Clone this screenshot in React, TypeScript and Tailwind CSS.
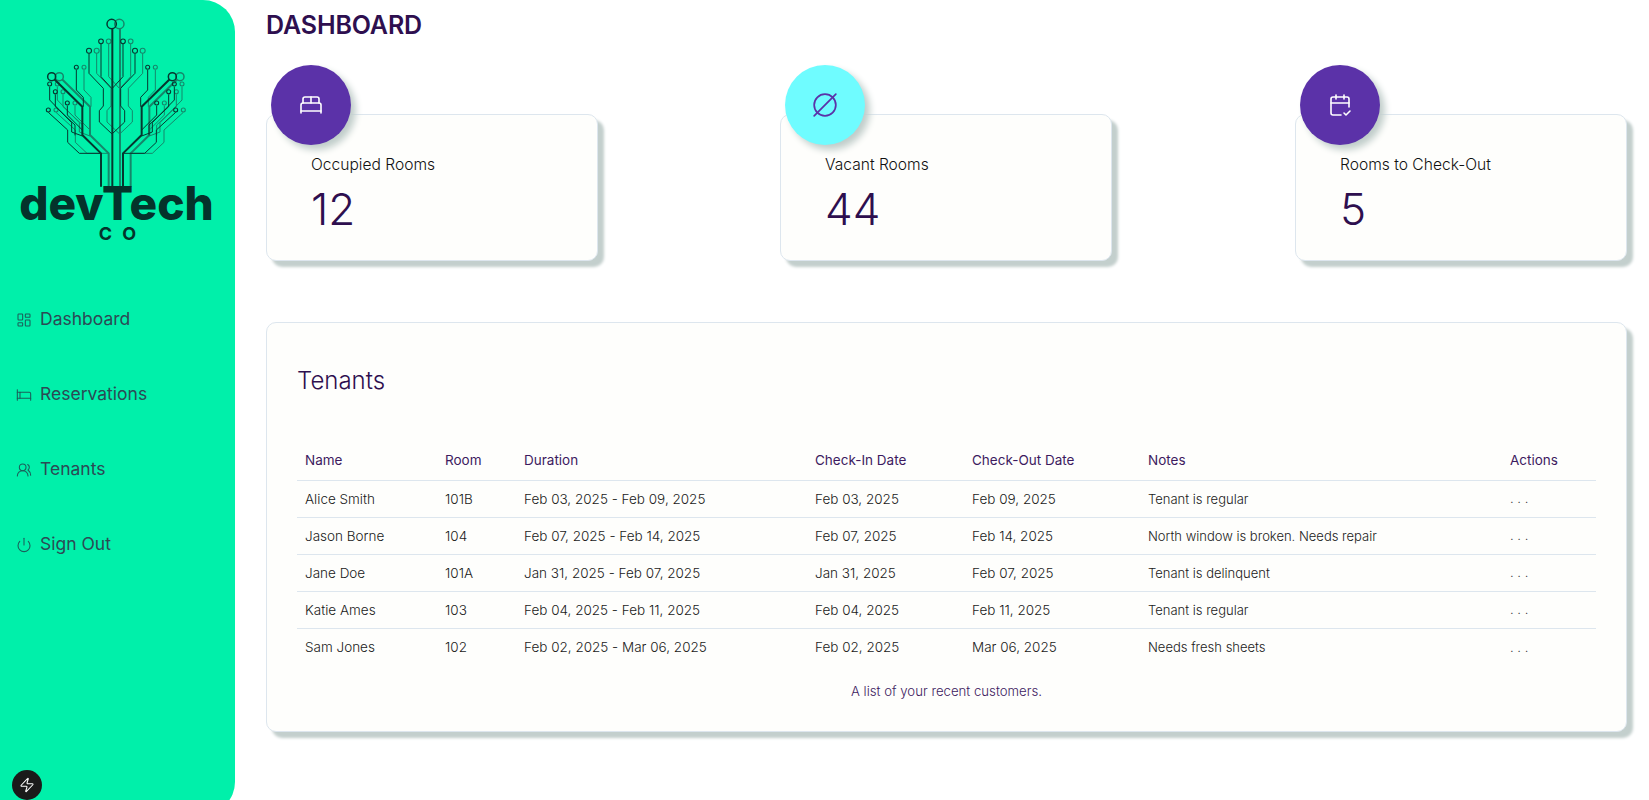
import { BedDouble, Bed, CalendarCheck2, CircleSlash2, LayoutDashboard, Power, UsersRound, Zap } from "lucide-react";
import type { ReactNode } from "react";

const navItems = [
  { label: "Dashboard", icon: <LayoutDashboard size={16} strokeWidth={1.6} /> },
  { label: "Reservations", icon: <Bed size={16} strokeWidth={1.6} /> },
  { label: "Tenants", icon: <UsersRound size={16} strokeWidth={1.6} /> },
  { label: "Sign Out", icon: <Power size={16} strokeWidth={1.6} /> },
];

const tenants = [
  ["Alice Smith", "101B", "Feb 03, 2025 - Feb 09, 2025", "Feb 03, 2025", "Feb 09, 2025", "Tenant is regular"],
  ["Jason Borne", "104", "Feb 07, 2025 - Feb 14, 2025", "Feb 07, 2025", "Feb 14, 2025", "North window is broken. Needs repair"],
  ["Jane Doe", "101A", "Jan 31, 2025 - Feb 07, 2025", "Jan 31, 2025", "Feb 07, 2025", "Tenant is delinquent"],
  ["Katie Ames", "103", "Feb 04, 2025 - Feb 11, 2025", "Feb 04, 2025", "Feb 11, 2025", "Tenant is regular"],
  ["Sam Jones", "102", "Feb 02, 2025 - Mar 06, 2025", "Feb 02, 2025", "Mar 06, 2025", "Needs fresh sheets"],
];

// one half of the circuit tree, in 3x units of the logo box
const thinLines = [
  "M213 102V200L246 236",
  "M177 130V190L220 235V288L208 302V336L246 372",
  "M139 180V240L160 262V290",
  "M59 230V270L125 338V366L157 378",
  "M76 253V290L135 345V376",
  "M112 287V315L157 360",
  "M55 307L113 360V397L148 430H213",
];
const thinDots = [
  [213, 94, 7],
  [177, 122, 7.5],
  [139, 172, 6],
  [59, 222, 6],
  [76, 245, 6],
  [112, 279, 6],
  [55, 300, 6],
];

function TreeHalf({ color }: { color: string }) {
  return (
    <g stroke={color} fill="none">
      {thinLines.map((d) => (
        <path key={d} d={d} strokeWidth="3" />
      ))}
      {thinDots.map(([x, y, r]) => (
        <circle key={`${x}-${y}`} cx={x} cy={y} r={r} strokeWidth="3.2" />
      ))}
      <circle cx="65" cy="200" r="12" strokeWidth="4.5" />
      <path d="M73 208L157 290V375L213 430V530" strokeWidth="6" />
    </g>
  );
}

function Tree({ color, dx }: { color: string; dx: number }) {
  return (
    <g transform={`translate(${dx} 0)`}>
      <TreeHalf color={color} />
      <g transform="translate(492 0) scale(-1 1)">
        <TreeHalf color={color} />
      </g>
      <circle cx="245" cy="42" r="14" stroke={color} strokeWidth="4.5" fill="none" />
      <path d="M247 56V530" stroke={color} strokeWidth="6" fill="none" />
    </g>
  );
}

function Logo() {
  return (
    <div className="flex flex-col items-center font-['Inter',sans-serif] text-[#04332b]">
      <svg viewBox="0 0 510 540" className="mr-[5px] mt-[10px] block h-[180px] w-[170px]">
        <Tree color="#15866a" dx={23} />
        <Tree color="#06372f" dx={0} />
      </svg>
      <div className="-mt-[8px] mr-[2px] h-[42px] text-[46px] font-extrabold leading-[42px]">devTech</div>
      <div className="mt-[3px] pl-[3px] text-[18px] font-bold leading-[14px] tracking-[3px]">C O</div>
    </div>
  );
}

function Sidebar() {
  return (
    <aside className="relative flex h-[814px] w-[235px] shrink-0 flex-col rounded-r-[32px] bg-[#00f0aa]">
      <Logo />
      <nav className="mt-[41px] flex flex-col">
        {navItems.map((item) => (
          <div key={item.label} className="flex h-[75px] items-center gap-[8px] pl-[16px] text-[#2c4a55]">
            <span className="text-[#1b5f5a]">{item.icon}</span>
            <span className="text-[17.5px]">{item.label}</span>
          </div>
        ))}
      </nav>
      <div className="absolute left-[12px] top-[770px] flex h-[30px] w-[30px] items-center justify-center rounded-full bg-[#1a1a1a] text-white">
        <Zap size={16} strokeWidth={1.6} />
      </div>
    </aside>
  );
}

function StatCard({ label, value, icon, circle, className = "" }: { label: string; value: string; icon: ReactNode; circle: string; className?: string }) {
  return (
    <div className={`relative h-[147px] w-[332px] rounded-[10px] border border-[#dde6ee] bg-[#fefefc] pl-[44px] pt-[40px] shadow-[6px_6px_3px_#c3cfcd] ${className}`}>
      <div className={`absolute -top-[50px] left-[4px] flex h-[80px] w-[80px] items-center justify-center rounded-full shadow-[5px_5px_7px_#c0cdca] ${circle}`}>
        {icon}
      </div>
      <div className="text-[15.6px] font-light leading-[20px] text-[#111111]">{label}</div>
      <div className="mt-[6px] text-[44px] font-light leading-[56px] text-[#2e0f4f]">{value}</div>
    </div>
  );
}

export default function App() {
  return (
    <div className="flex h-[800px] overflow-hidden bg-white font-['Inter',sans-serif]">
      <Sidebar />
      <main className="flex-1 pl-[31px] pr-[22px]">
        <h1 className="mt-[9px] text-[25px] font-semibold leading-[32px] tracking-[-0.005em] text-[#2e0f4f]">DASHBOARD</h1>
        <section className="mt-[73px] flex justify-between">
          <StatCard label="Occupied Rooms" value="12" circle="bg-[#5b32a8] text-white" icon={<BedDouble size={24} strokeWidth={1.6} />} />
          <StatCard className="mr-[1px]" label="Vacant Rooms" value="44" circle="bg-[#6ffcff] text-[#5b32a8]" icon={<CircleSlash2 size={26} strokeWidth={1.6} />} />
          <StatCard label="Rooms to Check-Out" value="5" circle="bg-[#5b32a8] text-white" icon={<CalendarCheck2 size={24} strokeWidth={1.6} />} />
        </section>
        <section className="mt-[61px] rounded-[10px] border border-[#dde6ee] bg-[#fefefc] px-[30px] pb-[30px] pt-[42px] shadow-[6px_6px_3px_#c3cfcd]">
          <h2 className="text-[24px] font-light leading-[32px] text-[#2e0f4f]">Tenants</h2>
          <table className="mt-[43px] w-full table-fixed caption-bottom text-[13.5px] font-light text-[#1a1a1a]">
            <thead>
              <tr className="h-[40px] border-b border-[#dde6ee] text-left text-[#3d1a5f]">
                <th className="w-[140px] px-2 font-normal">Name</th>
                <th className="w-[79px] px-2 font-normal">Room</th>
                <th className="w-[291px] px-2 font-normal">Duration</th>
                <th className="w-[157px] px-2 font-normal">Check-In Date</th>
                <th className="w-[176px] px-2 font-normal">Check-Out Date</th>
                <th className="w-[362px] px-2 font-normal">Notes</th>
                <th className="px-2 font-normal">Actions</th>
              </tr>
            </thead>
            <tbody>
              {tenants.map((row) => (
                <tr key={row[0]} className="h-[37px] border-b border-[#dde6ee] last:border-b-0">
                  {row.map((cell, i) => (
                    <td key={i} className={i === 5 ? "px-2 pt-[2px] text-[13px]" : "px-2 pt-[1px]"}>{cell}</td>
                  ))}
                  <td className="px-2 pt-[1px] text-[13px]">. . .</td>
                </tr>
              ))}
            </tbody>
            <caption className="mt-[16px] text-center text-[13.2px] font-light leading-[20px] text-[#3d1a5f]">
              A list of your recent customers.
            </caption>
          </table>
        </section>
      </main>
    </div>
  );
}
